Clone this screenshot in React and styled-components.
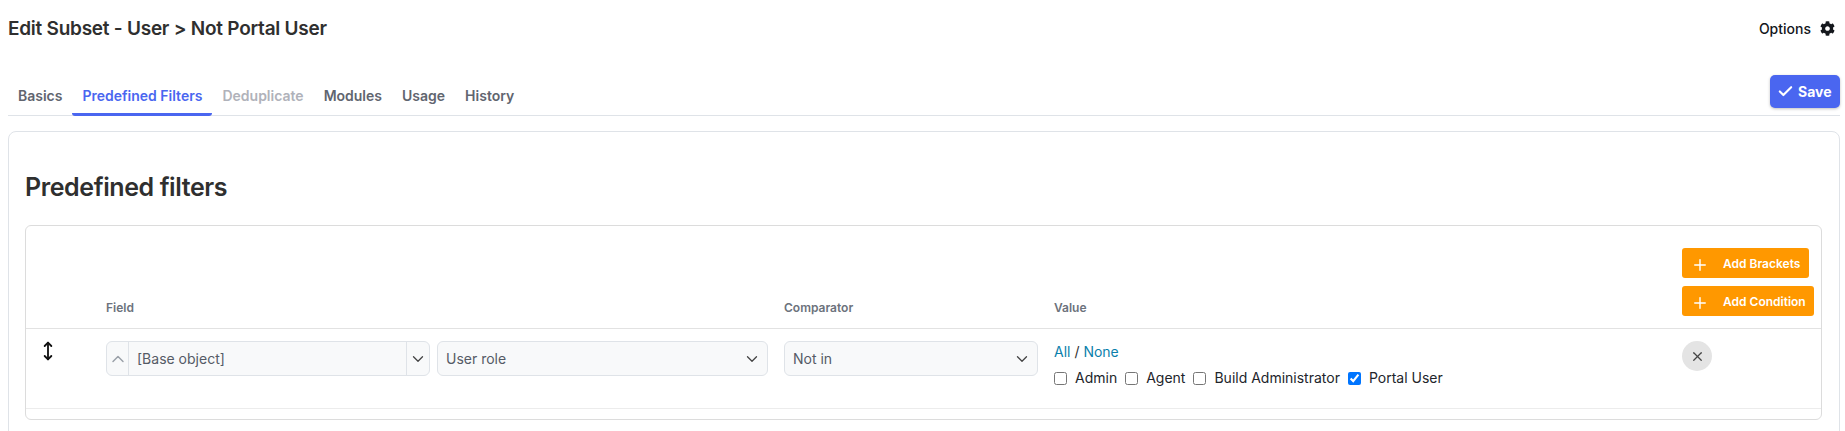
import React from "react";
import styled, { createGlobalStyle } from "styled-components";
import { Check, ChevronDown, ChevronUp, MoveVertical, Plus, X } from "lucide-react";
import { FaCog } from "react-icons/fa";

const GlobalStyle = createGlobalStyle`
  html, body {
    margin: 0;
    height: 431px;
    overflow: hidden;
    background: #fff;
  }
  body {
    font-family: Inter, "Liberation Sans", sans-serif;
    color: #2f2f2f;
  }
`;

const Page = styled.div`
  padding: 0 5px 0 8px;
`;

const TitleBar = styled.div`
  display: flex;
  justify-content: space-between;
  align-items: center;
  height: 56px;
`;

const Title = styled.h1`
  margin: 0;
  font-size: 19px;
  font-weight: 600;
  letter-spacing: -0.25px;
  color: #2f2f2f;
`;

const Options = styled.div`
  display: flex;
  align-items: center;
  gap: 9px;
  margin-right: 5px;
  font-size: 14px;
  font-weight: 500;
  color: #14171c;
`;

const TabBar = styled.div`
  display: flex;
  justify-content: space-between;
  align-items: flex-end;
  height: 60px;
  border-bottom: 1.5px solid #dfe3e8;
  box-sizing: border-box;
`;

const Tabs = styled.div`
  display: flex;
`;

const Tab = styled.div`
  padding: 0 10px 7px;
  margin-bottom: -1px;
  font-size: 14px;
  font-weight: 600;
  line-height: 20px;
  border-bottom: 3px solid ${(p) => (p.$active ? "#4a66f0" : "transparent")};
  border-radius: 3px;
  color: ${(p) => (p.$active ? "#4a66f0" : p.$disabled ? "#b0b2ba" : "#61656f")};
`;

const SaveButton = styled.button`
  display: flex;
  align-items: center;
  gap: 4px;
  width: 70px;
  height: 33px;
  margin-bottom: 7px;
  padding: 0 0 0 7px;
  border: 0;
  border-radius: 5px;
  background: #4a66f0;
  box-shadow: 0 1px 3px rgba(0, 0, 0, 0.25);
  color: #fff;
  font: 700 14px Inter, "Liberation Sans", sans-serif;
`;

const Card = styled.section`
  margin-top: 15px;
  padding: 0 17px 24px 16px;
  height: 400px;
  box-sizing: border-box;
  border: 1.5px solid #dfe3e8;
  border-radius: 8px;
`;

const Heading = styled.h2`
  margin: 0;
  padding-top: 39px;
  height: 93px;
  box-sizing: border-box;
  font-size: 25px;
  line-height: 32px;
  font-weight: 600;
  letter-spacing: -0.4px;
  color: #2f2f2f;
`;

const FilterBox = styled.div`
  height: 195px;
  box-sizing: border-box;
  border: 1px solid #dcdcdc;
  border-radius: 6px;
`;

const Row = styled.div`
  display: grid;
  grid-template-columns: 80px 678px 270px 628px 1fr;
`;

const HeadRow = styled(Row)`
  height: 103px;
  box-sizing: border-box;
  border-bottom: 1.5px solid #e2e2e2;
`;

const BodyRow = styled(Row)`
  height: 80px;
  box-sizing: border-box;
  padding-top: 12px;
  border-bottom: 1px solid #ececec;
`;

const HeadLabel = styled.div`
  align-self: end;
  padding-bottom: 12px;
  font-size: 12px;
  line-height: 16px;
  font-weight: 600;
  color: #6c727c;
`;

const ActionStack = styled.div`
  display: flex;
  flex-direction: column;
  align-items: flex-start;
  gap: 8px;
  padding-top: 22px;
`;

const AddButton = styled.button`
  display: flex;
  align-items: center;
  width: ${(p) => p.$width}px;
  height: 30px;
  padding: 0 0 0 9px;
  border: 0;
  border-radius: 3px;
  background: #ff9800;
  color: #fff;
  font: 600 12px Inter, "Liberation Sans", sans-serif;

  svg {
    margin-right: 14px;
    margin-top: 3px;
    flex: none;
  }
`;

const Handle = styled.div`
  padding: 0 0 0 12px;
  color: #111;
`;

const FieldCell = styled.div`
  display: flex;
  gap: 7px;
`;

const SelectGroup = styled.div`
  display: flex;
  width: 324px;
  height: 35px;
  box-sizing: border-box;
  border: 1px solid #dfe3e8;
  border-radius: 6px;
  background: #f8f9fa;
  color: #555b66;
  font-size: 14px;
`;

const StepButton = styled.div`
  display: flex;
  align-items: center;
  justify-content: center;
  flex: none;
  width: ${(p) => p.$width}px;
  color: ${(p) => (p.$muted ? "#9aa0a8" : "#444")};
`;

const GroupText = styled.div`
  flex: 1;
  padding-left: 8px;
  line-height: 33px;
  border-left: 1px solid #dfe3e8;
  border-right: 1px solid #dfe3e8;
`;

const Select = styled.div`
  display: flex;
  align-items: center;
  justify-content: space-between;
  width: ${(p) => p.$width}px;
  height: 35px;
  box-sizing: border-box;
  padding: 0 6px 0 8px;
  border: 1px solid #dfe3e8;
  border-radius: 6px;
  background: #f8f9fa;
  color: #555b66;
  font-size: 14px;

  svg {
    color: #444;
  }
`;

const ValueCell = styled.div`
  font-size: 14px;
  color: #2f2f2f;
`;

const AllNone = styled.div`
  line-height: 20px;
  margin-top: 1px;
`;

const TextLink = styled.a`
  color: #0b7fab;
`;

const Choices = styled.div`
  display: flex;
  margin-top: 6px;
  line-height: 20px;
`;

const Choice = styled.label`
  display: flex;
  align-items: center;
  margin-right: 8px;
  color: #22252b;

  input {
    width: 13px;
    height: 13px;
    margin: 0 8px 0 0;
  }
`;

const CloseButton = styled.div`
  display: flex;
  align-items: center;
  justify-content: center;
  width: 30px;
  height: 30px;
  border-radius: 50%;
  background: #e4e4e4;
  color: #444;
`;

const roles = [
  { name: "Admin", on: false },
  { name: "Agent", on: false },
  { name: "Build Administrator", on: false },
  { name: "Portal User", on: true },
];

export default function App() {
  return (
    <Page>
      <GlobalStyle />
      <TitleBar>
        <Title>Edit Subset - User &gt; Not Portal User</Title>
        <Options>
          Options <FaCog size={15} />
        </Options>
      </TitleBar>
      <TabBar>
        <Tabs>
          <Tab>Basics</Tab>
          <Tab $active>Predefined Filters</Tab>
          <Tab $disabled>Deduplicate</Tab>
          <Tab>Modules</Tab>
          <Tab>Usage</Tab>
          <Tab>History</Tab>
        </Tabs>
        <SaveButton>
          <Check size={17} strokeWidth={3} /> Save
        </SaveButton>
      </TabBar>
      <Card>
        <Heading>Predefined filters</Heading>
        <FilterBox>
          <HeadRow>
            <div />
            <HeadLabel>Field</HeadLabel>
            <HeadLabel>Comparator</HeadLabel>
            <HeadLabel>Value</HeadLabel>
            <ActionStack>
              <AddButton $width={127}>
                <Plus size={18} strokeWidth={1.9} /> Add Brackets
              </AddButton>
              <AddButton $width={132}>
                <Plus size={18} strokeWidth={1.9} /> Add Condition
              </AddButton>
            </ActionStack>
          </HeadRow>
          <BodyRow>
            <Handle>
              <MoveVertical size={20} strokeWidth={2.2} />
            </Handle>
            <FieldCell>
              <SelectGroup>
                <StepButton $width={21} $muted>
                  <ChevronUp size={20} strokeWidth={1.75} />
                </StepButton>
                <GroupText>[Base object]</GroupText>
                <StepButton $width={22}>
                  <ChevronDown size={18} strokeWidth={1.75} />
                </StepButton>
              </SelectGroup>
              <Select $width={331}>
                User role <ChevronDown size={18} strokeWidth={1.75} />
              </Select>
            </FieldCell>
            <div>
              <Select $width={254}>
                Not in <ChevronDown size={18} strokeWidth={1.75} />
              </Select>
            </div>
            <ValueCell>
              <AllNone>
                <TextLink>All</TextLink> / <TextLink>None</TextLink>
              </AllNone>
              <Choices>
                {roles.map((role) => (
                  <Choice key={role.name}>
                    <input type="checkbox" defaultChecked={role.on} />
                    {role.name}
                  </Choice>
                ))}
              </Choices>
            </ValueCell>
            <div>
              <CloseButton>
                <X size={15} />
              </CloseButton>
            </div>
          </BodyRow>
        </FilterBox>
      </Card>
    </Page>
  );
}
